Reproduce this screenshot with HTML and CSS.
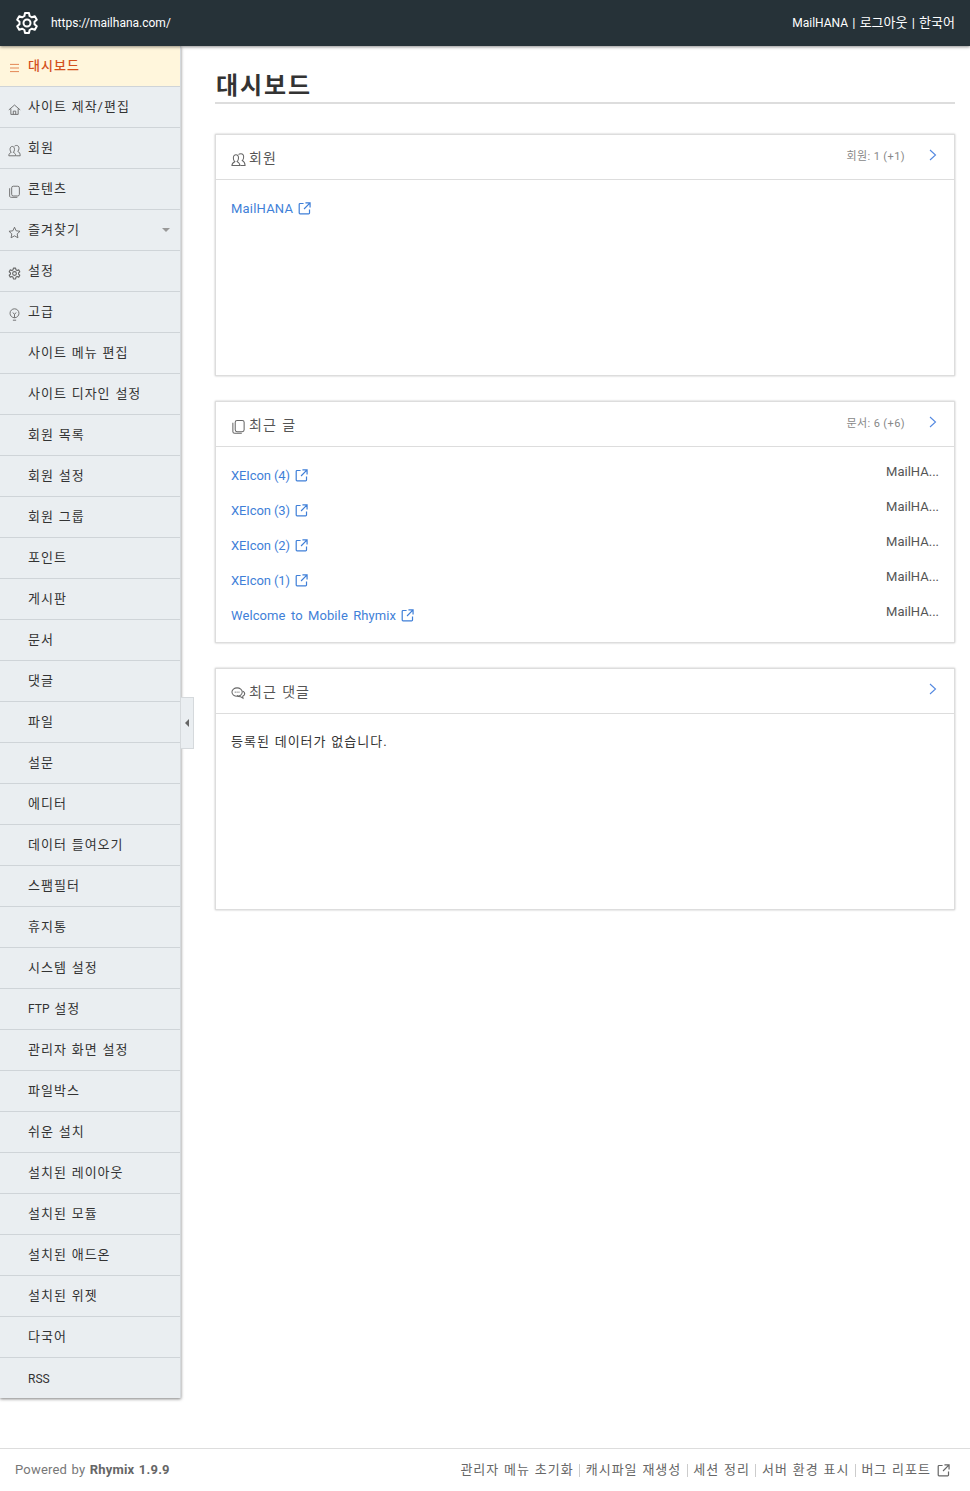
FILE: index.html
```html
<!DOCTYPE html>
<html lang="ko">
<head>
<meta charset="utf-8">
<title>대시보드</title>
<link rel="stylesheet" href="styles.css">
</head>
<body>
<svg class="defs" width="0" height="0" aria-hidden="true">
  <defs>
    <symbol id="i-users" viewBox="0 0 16 16"><g fill="none" stroke="currentColor" stroke-width="1.1"><path d="M1 14.500c0-2.200.8-3.200 3-4.200-1-.8-1.500-2.200-1.500-3.800C2.500 4.300 3.700 3 5.300 3S8 4.300 8 6.500c0 1.600-.5 3-1.500 3.800 2 1 3 2 3 4.200z"/><path d="M8 2.700C8.500 2 9.700 1.800 10.600 1.800 12.400 1.800 13.500 3.200 13.500 5.300c0 1.600-.5 3-1.500 3.800 2 1 3 2.200 3 5.400h-5"/></g></symbol>
    <symbol id="i-home" viewBox="0 0 16 16"><g fill="none" stroke="currentColor" stroke-width="1.100"><path d="M1 8.500 8 2.500l7 6"/><path d="M3.500 7v7h9V7"/><path d="M6.500 14v-4h3v4"/></g></symbol>
    <symbol id="i-docs" viewBox="0 0 16 16"><g fill="none" stroke="currentColor" stroke-width="1.100"><rect x="4.500" y="1.500" width="9.500" height="12" rx="2"/><path d="M2 4v9.500C2 14.700 3 15.200 4 15.200h7.500"/></g></symbol>
    <symbol id="i-star" viewBox="0 0 16 16"><path fill="none" stroke="currentColor" stroke-width="1.100" d="M8 1.500l2 4.400 4.800.6-3.500 3.200.9 4.800L8 12.100l-4.200 2.400.9-4.800L1.200 6.500 6 5.900z"/></symbol>
    <symbol id="i-gear" viewBox="0 0 24 24"><g fill="none" stroke="currentColor" stroke-width="2" stroke-linejoin="round"><path d="M10 2h4l.6 3 2.300 1.300 2.900-1 2 3.500-2.300 2v2.400l2.300 2-2 3.500-2.900-1-2.300 1.300-.6 3h-4l-.6-3-2.300-1.300-2.900 1-2-3.500 2.300-2v-2.400l-2.300-2 2-3.500 2.900 1L9.400 5z"/><circle cx="12" cy="12" r="3.500"/></g></symbol>
    <symbol id="i-bulb" viewBox="0 0 16 16"><g fill="none" stroke="currentColor" stroke-width="1.100"><circle cx="8" cy="6.500" r="5.500"/><path d="M6 5.500 8 8l2-2.500M8 8v4M6 15h4"/></g></symbol>
    <symbol id="i-chat" viewBox="0 0 16 16"><g fill="none" stroke="currentColor" stroke-width="1.100"><ellipse cx="6.500" cy="6.500" rx="5.500" ry="4.500"/><path d="M12.500 5.500c1.500.8 2.500 2 2 3.500-.3 1-1 1.500-2 2l.3 2-2.500-1.500c-1.500 0-3-.3-3.800-1.500"/></g><circle cx="4.500" cy="6.500" r=".7" fill="currentColor"/><circle cx="6.500" cy="6.500" r=".7" fill="currentColor"/><circle cx="8.500" cy="6.500" r=".7" fill="currentColor"/></symbol>
    <symbol id="i-ext" viewBox="0 0 14 14"><g fill="none" stroke="currentColor" stroke-width="1.300"><path d="M6 1.600H2.200c-.5 0-.9.400-.9.900v9.300c0 .5.400.9.900.9h9.300c.5 0 .9-.4.900-.9V8"/><path d="M8 1h5v5M13 1 6.500 7.500"/></g></symbol>
    <symbol id="i-next" viewBox="0 0 8 12"><path fill="none" stroke="currentColor" stroke-width="1.100" d="M1 1l5.500 5L1 11"/></symbol>
  </defs>
</svg>

<header class="topbar">
  <a class="brand" href="#">
    <svg class="brand-icon"><use href="#i-gear"/></svg>
    <span class="brand-url">https://mailhana.com/</span>
  </a>
  <div class="account"><span class="latin">MailHANA</span> | 로그아웃 | 한국어</div>
</header>

<div class="layout">
  <nav class="sidebar">
    <a class="nav-item active" href="#">
      <svg class="nav-icon nav-icon-menu" viewBox="0 0 10 10"><path d="M0 1h10M0 5h10M0 9h10" stroke="currentColor" fill="none"/></svg>
      <span class="nav-label">대시보드</span>
    </a>
    <a class="nav-item" href="#"><svg class="nav-icon"><use href="#i-home"/></svg><span class="nav-label">사이트 제작/편집</span></a>
    <a class="nav-item" href="#"><svg class="nav-icon"><use href="#i-users"/></svg><span class="nav-label">회원</span></a>
    <a class="nav-item" href="#"><svg class="nav-icon"><use href="#i-docs"/></svg><span class="nav-label">콘텐츠</span></a>
    <a class="nav-item" href="#"><svg class="nav-icon"><use href="#i-star"/></svg><span class="nav-label">즐겨찾기</span><span class="caret"></span></a>
    <a class="nav-item" href="#"><svg class="nav-icon"><use href="#i-gear"/></svg><span class="nav-label">설정</span></a>
    <a class="nav-item" href="#"><svg class="nav-icon"><use href="#i-bulb"/></svg><span class="nav-label">고급</span></a>
    <a class="nav-item plain" href="#"><span class="nav-label">사이트 메뉴 편집</span></a>
    <a class="nav-item plain" href="#"><span class="nav-label">사이트 디자인 설정</span></a>
    <a class="nav-item plain" href="#"><span class="nav-label">회원 목록</span></a>
    <a class="nav-item plain" href="#"><span class="nav-label">회원 설정</span></a>
    <a class="nav-item plain" href="#"><span class="nav-label">회원 그룹</span></a>
    <a class="nav-item plain" href="#"><span class="nav-label">포인트</span></a>
    <a class="nav-item plain" href="#"><span class="nav-label">게시판</span></a>
    <a class="nav-item plain" href="#"><span class="nav-label">문서</span></a>
    <a class="nav-item plain" href="#"><span class="nav-label">댓글</span></a>
    <a class="nav-item plain" href="#"><span class="nav-label">파일</span></a>
    <a class="nav-item plain" href="#"><span class="nav-label">설문</span></a>
    <a class="nav-item plain" href="#"><span class="nav-label">에디터</span></a>
    <a class="nav-item plain" href="#"><span class="nav-label">데이터 들여오기</span></a>
    <a class="nav-item plain" href="#"><span class="nav-label">스팸필터</span></a>
    <a class="nav-item plain" href="#"><span class="nav-label">휴지통</span></a>
    <a class="nav-item plain" href="#"><span class="nav-label">시스템 설정</span></a>
    <a class="nav-item plain" href="#"><span class="nav-label"><span class="latin">FTP</span> 설정</span></a>
    <a class="nav-item plain" href="#"><span class="nav-label">관리자 화면 설정</span></a>
    <a class="nav-item plain" href="#"><span class="nav-label">파일박스</span></a>
    <a class="nav-item plain" href="#"><span class="nav-label">쉬운 설치</span></a>
    <a class="nav-item plain" href="#"><span class="nav-label">설치된 레이아웃</span></a>
    <a class="nav-item plain" href="#"><span class="nav-label">설치된 모듈</span></a>
    <a class="nav-item plain" href="#"><span class="nav-label">설치된 애드온</span></a>
    <a class="nav-item plain" href="#"><span class="nav-label">설치된 위젯</span></a>
    <a class="nav-item plain" href="#"><span class="nav-label">다국어</span></a>
    <a class="nav-item plain last" href="#"><span class="nav-label"><span class="latin">RSS</span></span></a>
    <a class="collapse" href="#"><span class="collapse-arrow"></span></a>
  </nav>

  <main class="content">
    <h1 class="page-title">대시보드</h1>

    <section class="panel">
      <div class="panel-head">
        <h2 class="panel-title"><svg class="panel-icon"><use href="#i-users"/></svg>회원</h2>
        <span class="panel-meta">회원: <span class="latin">1 (+1)</span></span>
        <svg class="panel-next"><use href="#i-next"/></svg>
      </div>
      <div class="panel-body">
        <a class="link" href="#">MailHANA<svg class="ext"><use href="#i-ext"/></svg></a>
      </div>
    </section>

    <section class="panel">
      <div class="panel-head">
        <h2 class="panel-title"><svg class="panel-icon"><use href="#i-docs"/></svg>최근 글</h2>
        <span class="panel-meta">문서: <span class="latin">6 (+6)</span></span>
        <svg class="panel-next"><use href="#i-next"/></svg>
      </div>
      <ul class="post-list">
        <li class="post"><a class="link link-tight" href="#">XEIcon (4)<svg class="ext"><use href="#i-ext"/></svg></a><span class="post-author">MailHA...</span></li>
        <li class="post"><a class="link link-tight" href="#">XEIcon (3)<svg class="ext"><use href="#i-ext"/></svg></a><span class="post-author">MailHA...</span></li>
        <li class="post"><a class="link link-tight" href="#">XEIcon (2)<svg class="ext"><use href="#i-ext"/></svg></a><span class="post-author">MailHA...</span></li>
        <li class="post"><a class="link link-tight" href="#">XEIcon (1)<svg class="ext"><use href="#i-ext"/></svg></a><span class="post-author">MailHA...</span></li>
        <li class="post"><a class="link link-wide" href="#">Welcome to Mobile Rhymix<svg class="ext"><use href="#i-ext"/></svg></a><span class="post-author">MailHA...</span></li>
      </ul>
    </section>

    <section class="panel">
      <div class="panel-head">
        <h2 class="panel-title"><svg class="panel-icon"><use href="#i-chat"/></svg>최근 댓글</h2>
        <svg class="panel-next"><use href="#i-next"/></svg>
      </div>
      <div class="panel-body"><p class="empty">등록된 데이터가 없습니다.</p></div>
    </section>
  </main>
</div>

<footer class="footer">
  <div class="powered">Powered by <strong>Rhymix 1.9.9</strong></div>
  <div class="footer-links">
    <a href="#">관리자 메뉴 초기화</a><i class="sep"></i><a href="#">캐시파일 재생성</a><i class="sep"></i><a href="#">세션 정리</a><i class="sep"></i><a href="#">서버 환경 표시</a><i class="sep"></i><a class="footer-last" href="#">버그 리포트<svg class="ext footer-ext"><use href="#i-ext"/></svg></a>
  </div>
</footer>
</body>
</html>
```

FILE: styles.css
```css
* { box-sizing: border-box; }
html, body { margin: 0; padding: 0; }
body {
  background: #fff;
  color: #333;
  font-family: Roboto, "Noto Sans CJK KR", sans-serif;
  font-size: 13px;
  line-height: 20px;
}
a { color: inherit; text-decoration: none; }
.defs { position: absolute; }
.latin { font-size: 12px; letter-spacing: 0; }

.topbar {
  height: 46px;
  background: #263238;
  color: #fff;
  display: flex;
  align-items: center;
  justify-content: space-between;
  padding: 0 15px;
  position: relative;
  z-index: 2;
  box-shadow: 0 1px 3px rgba(0,0,0,.45);
}
.brand { display: flex; align-items: center; }
.brand-icon { width: 24px; height: 24px; margin-right: 12px; color: #fff; }
.brand-url { font-size: 12px; }
.account { font-size: 13px; word-spacing: 1px; }

.layout { display: flex; align-items: flex-start; }
.sidebar {
  width: 181px;
  flex: none;
  position: relative;
  background: #eaeef1;
  border-right: 1px solid #d5d9dc;
  box-shadow: 0 1px 3px rgba(0,0,0,.5);
}
.nav-item {
  display: flex;
  align-items: center;
  height: 41px;
  padding: 0 10px 0 8px;
  border-bottom: 1px solid #cfd4d8;
  color: #333;
  font-size: 13px;
  letter-spacing: 1px;
  word-spacing: .6px;
}
.nav-item.plain { padding-left: 28px; }
.nav-item.last { border-bottom: 0; height: 40px; padding-top: 1px; }
.nav-item.active { background: #fff6dc; color: #d4501c; font-weight: 500; }
.nav-icon { width: 13px; height: 13px; margin: 5px 7px 0 0; color: #666; flex: none; }
.nav-icon-menu { width: 9px; height: 10px; margin: 4px 9px 0 2px; color: #e07a45; }
.caret {
  margin-left: auto;
  border: 4px solid transparent;
  border-top-color: #999;
  border-bottom: 0;
}
.collapse {
  position: absolute;
  top: 651px;
  left: 181px;
  width: 13px;
  height: 52px;
  background: #eaeef1;
  border: 1px solid #d5d9dc;
  border-left: 0;
  display: flex;
  align-items: center;
  justify-content: center;
}
.collapse-arrow {
  border: 4px solid transparent;
  border-right-color: #666;
  border-left: 0;
}

.content { flex: 1; min-width: 0; padding: 20px 15px 0 34px; }
.page-title {
  margin: 0 0 30px;
  height: 38px;
  padding: 4px 0 0 1px;
  font-size: 24px;
  line-height: 32px;
  font-weight: 700;
  color: #333;
  letter-spacing: 1.9px;
  border-bottom: 2px solid #ddd;
}
.panel {
  height: 242px;
  margin-bottom: 25px;
  border: 1px solid #ddd;
  box-shadow: 0 0 2px rgba(0,0,0,.25);
  background: #fff;
}
.panel-head {
  display: flex;
  align-items: flex-start;
  height: 45px;
  padding: 0 17px 0 15px;
  border-bottom: 1px solid #ddd;
}
.panel-title {
  margin: 13px auto 0 0;
  display: flex;
  align-items: center;
  font-size: 14px;
  font-weight: 400;
  line-height: 20px;
  letter-spacing: 1px;
  word-spacing: 1px;
  color: #555;
}
.panel-icon { width: 15px; height: 15px; margin: 3px 3px 0 0; color: #666; }
.panel-meta { margin-top: 12px; font-size: 11px; color: #888; letter-spacing: .4px; }
.panel-meta .latin { font-size: 11px; letter-spacing: .4px; }
.panel-next { width: 8px; height: 12px; margin: 14px 0 0 24px; color: #5388e0; }
.panel-body { padding: 19px 15px; }
.link { color: #3f7fd8; display: inline-flex; align-items: center; letter-spacing: .2px; align-self: flex-start; }
.link-tight { letter-spacing: -.1px; }
.link-wide { letter-spacing: .1px; word-spacing: 2px; }
.ext { width: 13px; height: 13px; margin: -1px 0 0 5px; }
.post-list { list-style: none; margin: 0; padding: 19px 15px 0; }
.post { display: flex; justify-content: space-between; height: 35px; }
.post-author { color: #555; position: relative; top: -4px; }
.empty { margin: -1px 0 0; letter-spacing: 1px; word-spacing: .6px; }

.footer {
  margin-top: 50px;
  height: 43px;
  border-top: 1px solid #ddd;
  display: flex;
  justify-content: space-between;
  align-items: center;
  padding: 0 20px 0 15px;
  color: #777;
}
.powered { letter-spacing: .2px; word-spacing: 1px; }
.powered strong { color: #666; }
.footer-links { display: flex; align-items: center; color: #666; letter-spacing: 1px; word-spacing: .6px; }
.footer-last { display: flex; align-items: center; }
.sep { width: 1px; height: 13px; background: #ccc; margin: 0 5.5px; }
.footer-ext { margin: 1px 0 0 6px; }
```
